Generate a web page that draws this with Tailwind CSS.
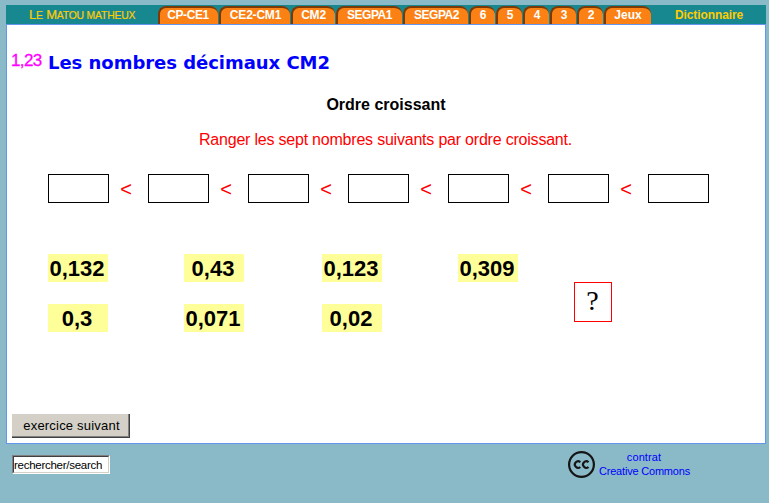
<!DOCTYPE html>
<html lang="fr">
<head>
<meta charset="utf-8">
<title>Le Matou matheux</title>
<script src="https://cdn.jsdelivr.net/npm/@tailwindcss/browser@4"></script>
</head>
<body class="w-[769px] h-[503px] overflow-hidden bg-[#8ab9c7] pt-[5px] pl-[6px] font-['Liberation_Sans',Arial,sans-serif] text-black">
<header class="flex h-[19px] w-[760px] items-end bg-[#188890] text-[12px] font-bold leading-[18px] text-[#ffcc00] whitespace-nowrap">
  <a class="w-[152px] h-[18px] pl-[23px] font-normal text-[13px] tracking-[-0.2px] [-webkit-text-stroke:0.2px_#ffcc00]">L<span class="text-[10.4px]">E</span> M<span class="text-[10.4px]">ATOU MATHEUX</span></a>
  <nav class="flex gap-px text-center text-white *:h-[18px] *:rounded-t-[8px] *:border-t-2 *:border-l-2 *:border-[#7a3a08] *:bg-[#fb8114] *:leading-[15px]">
    <a class="w-[60px] pr-[2px] tracking-[-0.4px]">CP-CE1</a>
    <a class="w-[71px] tracking-[-0.2px]">CE2-CM1</a>
    <a class="w-[44px] pr-px tracking-[-0.2px]">CM2</a>
    <a class="w-[66px] pr-px tracking-[-0.5px]">SEGPA1</a>
    <a class="w-[65px] tracking-[-0.5px]">SEGPA2</a>
    <a class="w-[26px]">6</a>
    <a class="w-[26px]">5</a>
    <a class="w-[26px]">4</a>
    <a class="w-[26px]">3</a>
    <a class="w-[26px]">2</a>
    <a class="w-[47px] pr-px">Jeux</a>
  </nav>
  <a class="ml-[24px] h-[18px] tracking-[-0.1px]">Dictionnaire</a>
</header>
<main class="flex h-[420px] w-[760px] flex-col border border-[#6495ed] bg-white">
  <div class="flex h-[66px] pl-[4px] pt-[25px] whitespace-nowrap">
    <span class="w-[37px] text-[17px] leading-[22px] tracking-[-0.6px] text-[#ff00ff] [-webkit-text-stroke:0.3px_#ff00ff]">1,23</span>
    <h1 class="font-['DejaVu_Sans',Verdana,sans-serif] text-[18px] font-bold leading-[25px] tracking-[-0.03px] text-[#0000ff]">Les nombres décimaux CM2</h1>
  </div>
  <h2 class="pt-[4px] text-center text-[16px] font-bold leading-[20px]">Ordre croissant</h2>
  <p class="pt-[16px] pr-px text-center text-[16px] leading-[18px] tracking-[-0.21px] text-[#ff0000]">Ranger les sept nombres suivants par ordre croissant.</p>
  <div class="mt-[25px] ml-[41px] flex text-[20px] leading-[30px] text-[#ff0000]">
    <i class="h-[29px] w-[61px] border border-black"></i><b class="h-[29px] w-[39px] pr-[5px] text-center font-normal">&lt;</b>
    <i class="h-[29px] w-[61px] border border-black"></i><b class="h-[29px] w-[39px] pr-[5px] text-center font-normal">&lt;</b>
    <i class="h-[29px] w-[61px] border border-black"></i><b class="h-[29px] w-[39px] pr-[5px] text-center font-normal">&lt;</b>
    <i class="h-[29px] w-[61px] border border-black"></i><b class="h-[29px] w-[39px] pr-[5px] text-center font-normal">&lt;</b>
    <i class="h-[29px] w-[61px] border border-black"></i><b class="h-[29px] w-[39px] pr-[5px] text-center font-normal">&lt;</b>
    <i class="h-[29px] w-[61px] border border-black"></i><b class="h-[29px] w-[39px] pr-[5px] text-center font-normal">&lt;</b>
    <i class="h-[29px] w-[61px] border border-black"></i>
  </div>
  <div class="mt-[51px] ml-[41px] flex">
    <div class="grid w-[526px] grid-cols-[136px_138px_136px_60px] content-start gap-y-[22px] text-center text-[22px] font-bold leading-[29px] *:h-[28px] *:w-[60px] *:bg-[#ffff99] *:pr-[2px]">
      <span>0,132</span><span>0,43</span><span>0,123</span><span>0,309</span>
      <span>0,3</span><span>0,071</span><span>0,02</span>
    </div>
    <div class="mt-[28px] h-[40px] w-[38px] border border-[#ff0000] pr-[1px] text-center font-['Liberation_Serif',serif] text-[28px] leading-[36px]">?</div>
  </div>
  <button class="mt-[82px] ml-[5px] h-[24px] w-[118px] border-r border-b border-r-[#404040] border-b-[#404040] bg-[#d4d0c8] shadow-[inset_-1px_-1px_#808080] pt-px pl-[2px] text-[13px] leading-[22px] tracking-[0.2px]">exercice suivant</button>
</main>
<footer class="flex w-[760px] pl-[6px]">
  <div class="mt-[11px] h-[19px] w-[98px] border border-t-[#808080] border-l-[#808080] border-r-white border-b-white bg-white"><div class="h-[17px] w-[96px] border border-t-[#404040] border-l-[#404040] border-r-[#d4d0c8] border-b-[#d4d0c8] text-[11.5px] leading-[17px] tracking-[-0.27px] whitespace-nowrap">rechercher/search</div></div>
  <svg class="ml-[458px] mt-[7px] h-[27px] w-[27px]" viewBox="0 0 27 27" fill="none" stroke="#151515"><circle cx="13.5" cy="13.5" r="12.4" stroke-width="2.2"/><path d="M12.3 11.3A3.2 3.2 0 1 0 12.3 15.9M20.5 11.3A3.2 3.2 0 1 0 20.5 15.9" stroke-width="2.1"/></svg>
  <a class="ml-[4px] mt-[6px] w-[90px] whitespace-nowrap text-center text-[11px] leading-[14px] tracking-[-0.2px] text-[#0000ff]"><span class="tracking-[0.1px]">contrat</span><br>Creative Commons</a>
</footer>
</body>
</html>
